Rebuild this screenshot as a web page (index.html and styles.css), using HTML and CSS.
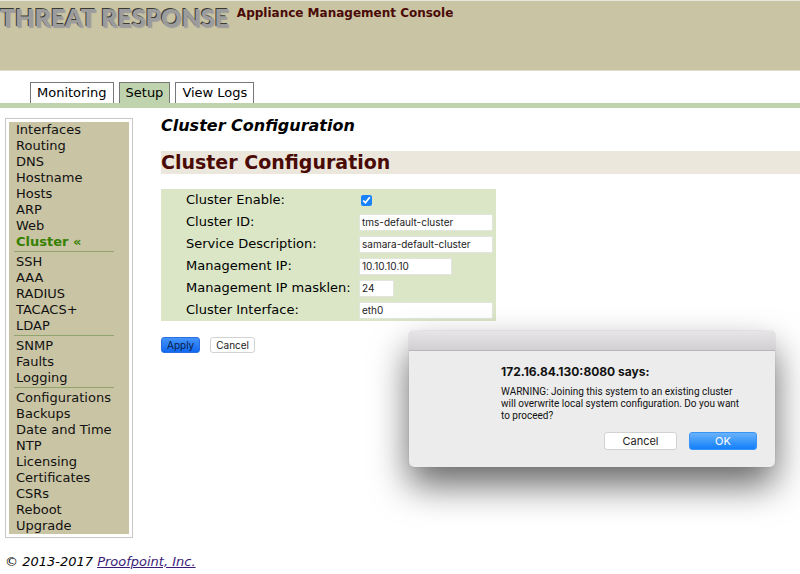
FILE: index.html
```html
<!DOCTYPE html>
<html lang="en">
<head>
  <meta charset="UTF-8">
  <meta name="viewport" content="width=device-width, initial-scale=1.0">
  <title>Threat Response - Cluster Configuration</title>
  <link rel="stylesheet" href="styles.css">
</head>
<body>
  <header class="banner">
    <span class="logo">THREAT RESPONSE</span>
    <span class="product">Appliance Management Console</span>
  </header>

  <!-- Tabs -->
  <nav class="tabs">
    <a href="#monitoring">Monitoring</a>
    <a href="#setup" class="active">Setup</a>
    <a href="#logs">View Logs</a>
  </nav>

  <div class="page">
    <!-- Setup menu -->
    <nav class="sidebar">
      <div class="menu">
        <ul>
          <li><a href="#interfaces">Interfaces</a></li>
          <li><a href="#routing">Routing</a></li>
          <li><a href="#dns">DNS</a></li>
          <li><a href="#hostname">Hostname</a></li>
          <li><a href="#hosts">Hosts</a></li>
          <li><a href="#arp">ARP</a></li>
          <li><a href="#web">Web</a></li>
          <li><a href="#cluster" class="current">Cluster «</a></li>
        </ul>
        <ul>
          <li><a href="#ssh">SSH</a></li>
          <li><a href="#aaa">AAA</a></li>
          <li><a href="#radius">RADIUS</a></li>
          <li><a href="#tacacs">TACACS+</a></li>
          <li><a href="#ldap">LDAP</a></li>
        </ul>
        <ul>
          <li><a href="#snmp">SNMP</a></li>
          <li><a href="#faults">Faults</a></li>
          <li><a href="#logging">Logging</a></li>
        </ul>
        <ul>
          <li><a href="#configurations">Configurations</a></li>
          <li><a href="#backups">Backups</a></li>
          <li><a href="#date">Date and Time</a></li>
          <li><a href="#ntp">NTP</a></li>
          <li><a href="#licensing">Licensing</a></li>
          <li><a href="#certificates">Certificates</a></li>
          <li><a href="#csrs">CSRs</a></li>
          <li><a href="#reboot">Reboot</a></li>
          <li><a href="#upgrade">Upgrade</a></li>
        </ul>
      </div>
    </nav>

    <main class="content">
      <h1>Cluster Configuration</h1>
      <h2>Cluster Configuration</h2>

      <form action="#" method="post">
        <div class="fields">
          <label for="enable">Cluster Enable:</label>
          <input type="checkbox" id="enable" name="enable" checked>

          <label for="clusterId">Cluster ID:</label>
          <input type="text" id="clusterId" name="clusterId" value="tms-default-cluster">

          <label for="service">Service Description:</label>
          <input type="text" id="service" name="service" value="samara-default-cluster">

          <label for="ip">Management IP:</label>
          <input type="text" id="ip" name="ip" class="medium" value="10.10.10.10">

          <label for="masklen">Management IP masklen:</label>
          <input type="text" id="masklen" name="masklen" class="short" value="24">

          <label for="iface">Cluster Interface:</label>
          <input type="text" id="iface" name="iface" value="eth0">
        </div>

        <div class="buttons">
          <button type="submit" class="apply">Apply</button>
          <button type="reset">Cancel</button>
        </div>
      </form>
    </main>
  </div>

  <footer>© 2013-2017 <a href="#proofpoint">Proofpoint, Inc.</a></footer>

  <!-- Join warning -->
  <dialog class="alert" open aria-labelledby="alertTitle">
    <div class="titlebar"></div>
    <div class="message">
      <h3 id="alertTitle">172.16.84.130:8080 says:</h3>
      <p>WARNING: Joining this system to an existing cluster will overwrite local system configuration. Do you want to proceed?</p>
    </div>
    <div class="actions">
      <button type="button">Cancel</button>
      <button type="button" class="ok">OK</button>
    </div>
  </dialog>
</body>
</html>
```
FILE: styles.css
```css
* {
  box-sizing: border-box;
}
body {
  margin: 0;
  background: #fff;
  color: #000;
  font-family: Verdana, "DejaVu Sans", sans-serif;
  font-size: 13px;
  line-height: 16px;
}
h1, h2, h3, p, ul {
  margin: 0;
  padding: 0;
}
button, input {
  font-family: Inter, sans-serif;
  font-size: 10px;
  margin: 0;
}

/* Banner */
.banner {
  display: flex;
  gap: 8px;
  height: 71px;
  padding-top: 4px;
  background: #c9c4a4;
  border-top: 1px solid #e8e6da;
  border-bottom: 1px solid #dedbc8;
}
.logo {
  color: #9c9c9c;
  font-family: Lato, sans-serif;
  font-size: 25px;
  font-weight: 900;
  line-height: 24px;
  text-shadow: -1px -1px 0 #3a3a34, 1px 1px 1px #9c9c9c;
}
.product {
  color: #4a0a06;
  font-size: 12px;
  font-weight: bold;
}

/* Tabs */
.tabs {
  display: flex;
  gap: 5px;
  padding: 11px 30px 0;
  border-bottom: 5px solid #bfd3ae;
}
.tabs a {
  padding: 2px 6px;
  border: 1px solid #777;
  border-bottom: 0;
  color: #000;
  text-decoration: none;
}
.tabs .active {
  background: #bfd3ae;
}

/* Side menu */
.page {
  display: flex;
  align-items: flex-start;
  gap: 28px;
  padding: 10px 0 0 5px;
}
.sidebar {
  flex: none;
  width: 128px;
  padding: 3px;
  border: 1px solid #c8c8c8;
}
.menu {
  padding: 0 15px 0 5px;
  background: #c9c4a4;
}
.menu ul {
  list-style: none;
}
.menu ul + ul {
  margin-top: 1px;
  padding-top: 2px;
  border-top: 1px solid #8fa56c;
}
.menu li {
  padding-left: 2px;
  white-space: nowrap;
}
.menu a {
  color: #111;
  text-decoration: none;
}
.menu .current {
  color: #358000;
  font-weight: bold;
}

/* Main column */
.content {
  flex: 1;
}
h1 {
  font-size: 16px;
  font-style: italic;
}
h2 {
  margin: 17px 0 15px;
  background: #ebe7dc;
  color: #4a0a06;
  font-size: 19px;
  line-height: 23px;
}
.fields {
  display: grid;
  grid-template-columns: 173px 134px;
  grid-auto-rows: 22px;
  align-items: center;
  width: fit-content;
  padding: 0 3px 0 25px;
  background: #dae6c6;
}
.fields input[type="text"] {
  width: 134px;
  height: 17px;
  padding: 0 2px;
  border: 1px solid #e2e4de;
  background: #fff;
  color: #222;
}
.fields input.medium {
  width: 93px;
}
.fields input.short {
  width: 35px;
}
.fields input[type="checkbox"] {
  width: 11px;
  height: 11px;
  margin-left: 2px;
  accent-color: #1a82fb;
}
.buttons {
  display: flex;
  gap: 10px;
  padding-top: 16px;
}
button {
  padding: 0 5px;
  border: 1px solid #d2d2d2;
  border-radius: 3px;
  background: #fff;
  color: #222;
  line-height: 14px;
}
.apply {
  border-color: #2a6ee0;
  background: linear-gradient(#4494fb, #1168f0);
  color: #0a1e46;
}

footer {
  padding: 16px 5px 4px;
  font-style: italic;
}
footer a {
  color: #3d1a78;
}

/* Browser alert over the page */
.alert {
  position: absolute;
  top: 331px;
  left: 409px;
  width: 366px;
  margin: 0;
  padding: 0 18px 17px 92px;
  overflow: visible;
  border: 0;
  border-radius: 5px;
  background: #ececec;
  color: #111;
  font-family: Inter, sans-serif;
  box-shadow: 0 0 1px #888, 0 18px 36px rgba(0, 0, 0, 0.6);
}
.titlebar {
  height: 20px;
  margin: 0 -18px 0 -92px;
  border-bottom: 1px solid #b8b6b8;
  border-radius: 5px 5px 0 0;
  background: linear-gradient(#e7e5e7, #d1cfd1);
}
.message {
  padding: 13px 12px 0 0;
}
.message h3 {
  font-size: 12px;
}
.message p {
  margin-top: 6px;
  font-family: Roboto, sans-serif;
  font-size: 10px;
  line-height: 12px;
}
.actions {
  display: flex;
  justify-content: flex-end;
  gap: 12px;
  padding-top: 10px;
}
.actions button {
  flex: none;
  width: 73px;
  font-size: 11px;
  line-height: 16px;
}
.actions .ok {
  width: 68px;
  border-color: #3a94f8;
  background: linear-gradient(#6ab2fa, #1280fb);
  color: #fff;
}
```
